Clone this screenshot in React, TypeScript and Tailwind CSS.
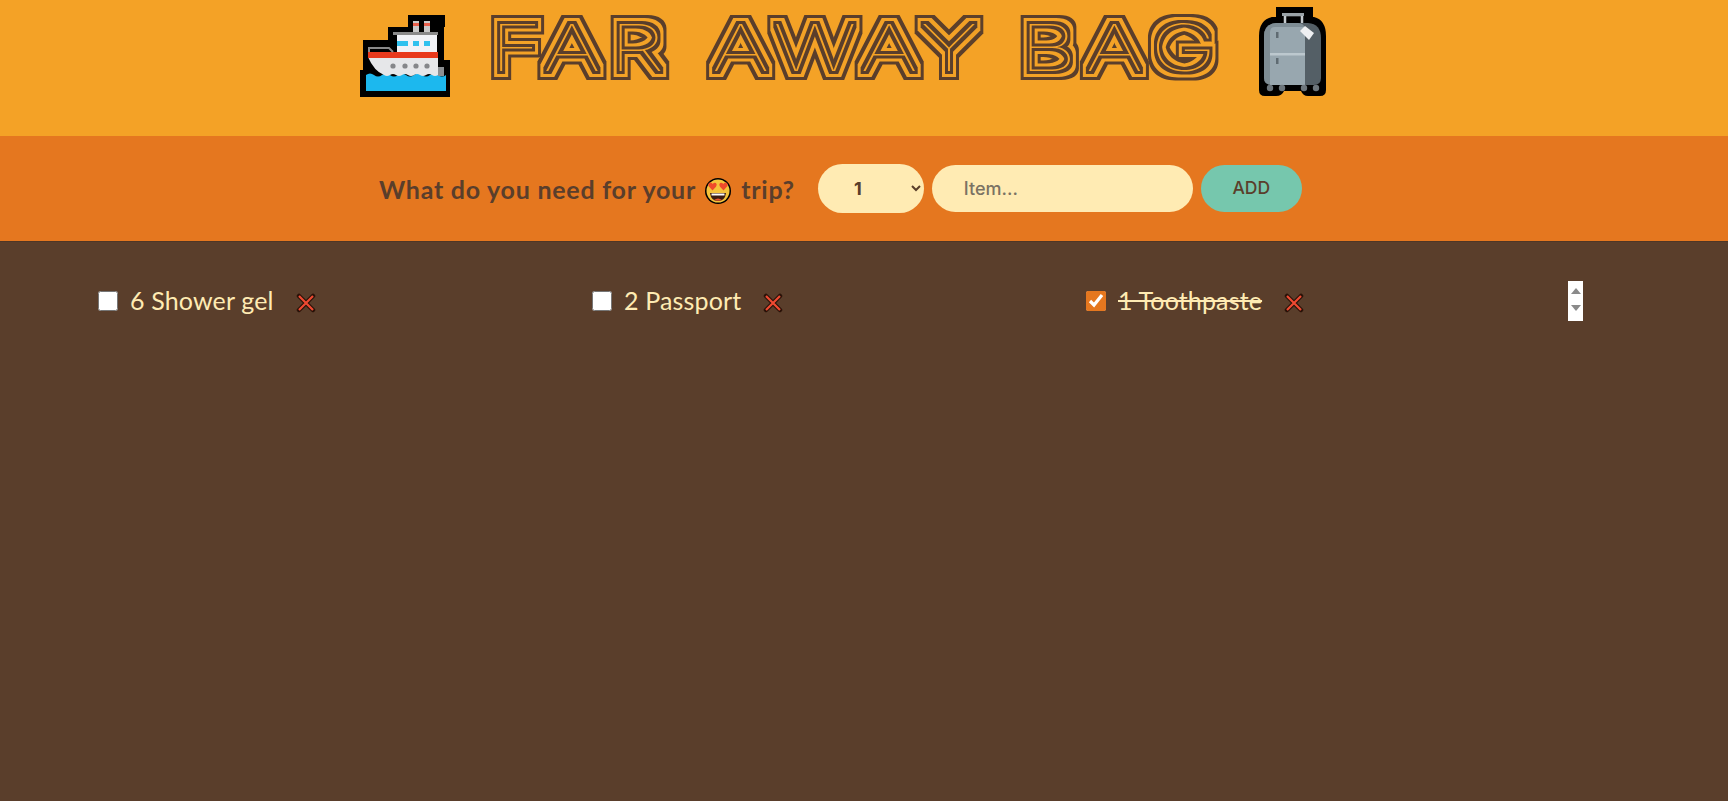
const Ship = () => (
  <svg width="110" height="105" viewBox="0 0 110 105" className="shrink-0">
    <path d="M58 15H95V27H94V60H100V97H10V70H13V40H38V27H58Z" fill="#000" />
    <path d="M16 75q4-3 8 0t8 0 8 0 8 0 8 0 8 0 8 0 8 0 8 0 8 0V91H16Z" fill="#1cb8ee" />
    <path d="M18 57H88V75q-3 2-6 0t-6 0-6 0-6 0-6 0-6 0-6 0-6 0-6 0q-10-4-16-18Z" fill="#e6e7e9" />
    <rect x="18" y="52" width="70" height="6" fill="#e8391c" />
    <path d="M19 52V48H39L43 52" fill="none" stroke="#8a8a8a" strokeWidth="2" />
    <rect x="47" y="34" width="40" height="18" fill="#f1f2f6" />
    <rect x="43" y="32" width="45" height="3" fill="#8a8a8a" />
    <rect x="63" y="21" width="6" height="11" fill="#c9c9c9" />
    <rect x="74" y="21" width="6" height="11" fill="#c9c9c9" />
    <rect x="63" y="23" width="6" height="3" fill="#e8604c" />
    <rect x="74" y="23" width="6" height="3" fill="#e8604c" />
    <rect x="47" y="41" width="11" height="5" fill="#2fc1ee" />
    <rect x="63" y="41" width="6" height="5" fill="#2fc1ee" />
    <rect x="74" y="41" width="6" height="5" fill="#2fc1ee" />
    <circle cx="43" cy="66" r="2.600" fill="#85878a" />
    <circle cx="55" cy="66" r="2.600" fill="#85878a" />
    <circle cx="66" cy="66" r="2.600" fill="#85878a" />
    <circle cx="77" cy="66" r="2.600" fill="#85878a" />
    <rect x="88" y="67" width="6" height="9" fill="#8c8f92" />
  </svg>
);

const Bag = () => (
  <svg width="90" height="105" viewBox="0 0 90 105" className="shrink-0">
    <path d="M26 7H63V17H64Q76 20 76 36V90Q76 96 70 96H58Q53 96 51 91H34Q32 96 26 96H15Q9 96 9 90V36Q9 20 22 17H26Z" fill="#000" />
    <path d="M35 24V15H52V24" fill="none" stroke="#c4cace" strokeWidth="2.500" />
    <rect x="32" y="13" width="22" height="3" fill="#9aa3a8" />
    <path d="M26 23H58Q71 24 71 38V78Q71 85 64 85H22Q14 85 14 78V36Q14 24 26 23Z" fill="#545f66" />
    <path d="M26 23H48Q55 23 55 30V85H22Q14 85 14 78V36Q14 24 26 23Z" fill="#7e8d95" />
    <path d="M25 27H55V85H20V32Q20 27 25 27Z" fill="#98a7af" />
    <rect x="20" y="53" width="35" height="2.500" fill="#bcc8ce" />
    <rect x="26" y="32" width="2.500" height="6" fill="#5f6b72" />
    <rect x="26" y="58" width="2.500" height="6" fill="#5f6b72" />
    <path d="M55 26L64 33L59 40L50 31Z" fill="#eef0f2" />
    <circle cx="20" cy="88" r="3.200" fill="#6d767c" />
    <circle cx="32" cy="88" r="3.200" fill="#6d767c" />
    <circle cx="54" cy="88" r="3.200" fill="#6d767c" />
    <circle cx="66" cy="88" r="3.200" fill="#6d767c" />
  </svg>
);

const HeartEyes = () => (
  <svg width="28" height="28" viewBox="0 0 28 28" className="inline-block align-[-6px] mx-[2px]">
    <circle cx="14" cy="14" r="13" fill="#000" />
    <circle cx="14" cy="14" r="11.500" fill="#f5c33b" />
    <path d="M6 16H22Q21 24 14 24T6 16Z" fill="#3b1d12" />
    <path d="M7.500 16.500H20.500V18.500H7.500Z" fill="#fff" />
    <path d="M10 23Q14 20 18 23Q14 24.500 10 23Z" fill="#e8502f" />
    <path d="M8.500 13.500L4.500 9Q3.800 5.500 6.500 5.500Q8 5.500 8.800 7Q10 5 12 6Q13.500 7.500 12 9.800Z" fill="#ef4a2b" />
    <path d="M19.500 13.500L23.500 9Q24.200 5.500 21.500 5.500Q20 5.500 19.200 7Q18 5 16 6Q14.500 7.500 16 9.800Z" fill="#ef4a2b" />
  </svg>
);

const Cross = () => (
  <svg width="20" height="20" viewBox="0 0 20 20" className="shrink-0">
    <path d="M3 3L17 17M17 3L3 17" stroke="#2a1208" strokeWidth="4.500" strokeLinecap="round" />
    <path d="M3 3L17 17M17 3L3 17" stroke="#ef4a32" strokeWidth="2.200" />
  </svg>
);

const items = [
  { text: "6 Shower gel", done: false },
  { text: "2 Passport", done: false },
  { text: "1 Toothpaste", done: true },
];

export default function App() {
  return (
    <div className="flex min-h-[801px] flex-col bg-[#5a3e2b] font-['Lato','Open_Sans',sans-serif]">
      <svg width="0" height="0" className="absolute">
        <filter id="inline" x="-10%" y="-40%" width="120%" height="180%" colorInterpolationFilters="sRGB">
          <feMorphology in="SourceAlpha" operator="dilate" radius="9" result="d9" />
          <feMorphology in="SourceAlpha" operator="dilate" radius="6" result="d6" />
          <feMorphology in="SourceAlpha" operator="dilate" radius="3" result="d3" />
          <feComposite in="d9" in2="d6" operator="out" result="outer" />
          <feComposite in="d3" in2="SourceAlpha" operator="out" result="inner" />
          <feMerge result="m">
            <feMergeNode in="outer" />
            <feMergeNode in="inner" />
          </feMerge>
          <feFlood floodColor="#5a3e2b" />
          <feComposite in2="m" operator="in" />
        </filter>
      </svg>

      <header className="flex h-[136px] items-start bg-[#f4a226] pl-[350px]">
        <Ship />
        <h1 className="ml-[30px] mt-[12px] w-[760px] whitespace-nowrap font-['Inter',sans-serif] text-[65px] leading-[72px] font-thin text-[#5a3e2b] [filter:url(#inline)]">
          <span className="inline-block origin-left scale-x-[1.38] tracking-[6.5px] [word-spacing:3px]">
            FAR AWAY <span className="ml-[-4px]">BAG</span>
          </span>
        </h1>
        <Bag />
      </header>

      <form className="flex h-[105px] items-center bg-[#e5771f] pl-[379px]">
        <h3 className="mr-[23px] mt-[2px] text-[25px] font-bold tracking-[0.75px] whitespace-nowrap text-[#5a3e2b]">
          What do you need for your <HeartEyes /> trip?
        </h3>
        <select className="mr-[8px] h-[49px] w-[106px] rounded-full bg-[#ffebb3] pr-[14px] text-center font-['Inter',sans-serif] text-[18px] font-bold text-[#5a3e2b]">
          <option>1</option>
        </select>
        <input
          placeholder="Item..."
          className="mr-[8px] h-[47px] w-[261px] rounded-full bg-[#ffebb3] pl-[32px] font-['Inter',sans-serif] text-[18px] font-medium text-[#5a3e2b] outline-none placeholder:text-[#7a7263]"
        />
        <button
          type="button"
          className="h-[47px] w-[101px] rounded-full bg-[#76c7ad] font-['Inter',sans-serif] text-[17.5px] font-medium text-[#5a3e2b]"
        >
          ADD
        </button>
      </form>

      <main className="grid flex-1 grid-cols-[494px_494px_482px_auto] content-start border-t border-[#4f3626] pt-[39px] pl-[98px]">
        {items.map((it) => (
          <div key={it.text} className="flex h-[40px] items-center">
            <input
              type="checkbox"
              defaultChecked={it.done}
              className="h-[20px] w-[20px] accent-[#e5771f]"
            />
            <span
              className={`ml-[12px] text-[25px] tracking-[0.15px] text-[#ffebb3] ${it.done ? "line-through" : ""}`}
            >
              {it.text}
            </span>
            <span className="ml-[22px] mt-[4px] flex">
              <Cross />
            </span>
          </div>
        ))}
        <div className="flex h-[40px] w-[15px] flex-col items-center justify-between bg-white pt-[6px] pb-[9px]">
          <svg width="12" height="8" viewBox="0 0 12 8">
            <path d="M6 1L11 7H1Z" fill="#8a8a8a" />
          </svg>
          <svg width="12" height="8" viewBox="0 0 12 8">
            <path d="M6 7L11 1H1Z" fill="#8a8a8a" />
          </svg>
        </div>
      </main>
    </div>
  );
}
